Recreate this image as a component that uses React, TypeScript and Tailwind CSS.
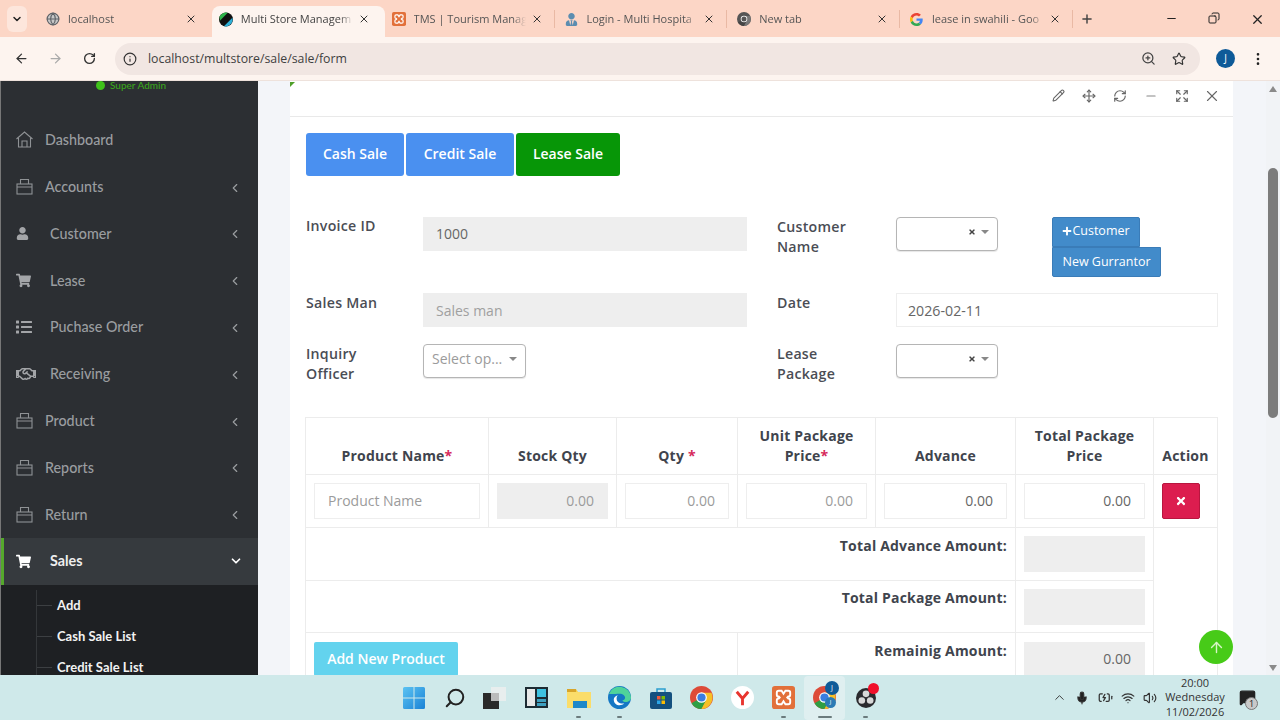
import React from "react";
import { ArrowLeft, ArrowRight, RotateCw, Info, ZoomIn, Star, EllipsisVertical, X, Plus, Minus, Copy, ChevronDown, ChevronLeft, ChevronUp, Pencil, Move, RefreshCw, Expand, ArrowUp, Search, Globe, Mic, Wifi, Volume2, BatteryCharging, MessageSquare } from "lucide-react";
import { FaUser, FaShoppingCart, FaList, FaRegHandshake, FaUserTie, FaPlus, FaTimes } from "react-icons/fa";

const Chrome = ({ s = 14, gray = false }: { s?: number; gray?: boolean }) => (
  <svg width={s} height={s} viewBox="0 0 24 24">
    <circle cx="12" cy="12" r="12" fill={gray ? "#555" : "#dd4b39"} />
    <path d="M12 12 L1.600 18 A12 12 0 0 0 12 24 L18 14 Z" fill={gray ? "#444" : "#2f9e44"} />
    <path d="M12 7 H22.400 A12 12 0 0 1 12 24 L17 14 Z" fill={gray ? "#777" : "#f6c026"} />
    <circle cx="12" cy="12" r="5.600" fill="#fff" />
    <circle cx="12" cy="12" r="4.300" fill={gray ? "#555" : "#3b7de0"} />
  </svg>
);
const GoogleG = () => (
  <svg width="13" height="13" viewBox="0 0 48 48">
    <path fill="#EA4335" d="M24 9.500c3.500 0 6.700 1.200 9.200 3.600l6.900-6.900C35.900 2.400 30.500 0 24 0 14.600 0 6.500 5.400 2.600 13.200l8 6.200C12.500 13.700 17.800 9.500 24 9.500z" />
    <path fill="#4285F4" d="M46.900 24.500c0-1.600-.1-3.100-.4-4.500H24v9h12.900c-.6 3-2.200 5.500-4.700 7.200l7.700 6c4.500-4.200 7-10.300 7-17.700z" />
    <path fill="#FBBC05" d="M10.500 28.600A14.500 14.500 0 0 1 9.700 24c0-1.600.3-3.200.8-4.600l-8-6.200A24 24 0 0 0 0 24c0 3.900.9 7.500 2.600 10.800l7.900-6.200z" />
    <path fill="#34A853" d="M24 48c6.500 0 11.900-2.100 15.900-5.800l-7.700-6c-2.200 1.400-4.900 2.300-8.200 2.300-6.200 0-11.500-4.200-13.400-9.900l-8 6.200C6.500 42.600 14.600 48 24 48z" />
  </svg>
);
const Flag = () => (
  <svg width="15" height="15" viewBox="0 0 24 24">
    <circle cx="12" cy="12" r="12" fill="#111" />
    <path d="M1 7 A12 12 0 0 1 15 .5 L1.500 14 Z" fill="#2eb44a" />
    <path d="M23 9 A12 12 0 0 1 8.500 23.500 Z" fill="#2fb0d8" />
  </svg>
);
const Xampp = ({ s = 14 }: { s?: number }) => (
  <svg width={s} height={s} viewBox="0 0 24 24">
    <rect width="24" height="24" rx="3" fill="#e2703a" />
    <path d="M7 5h3l2 3 2-3h3a2 2 0 0 1 2 2v2a2 2 0 0 1-2 2l-1 1 1 1a2 2 0 0 1 2 2v2a2 2 0 0 1-2 2h-3l-2-3-2 3H7a2 2 0 0 1-2-2v-2a2 2 0 0 1 2-2l1-1-1-1a2 2 0 0 1-2-2V7a2 2 0 0 1 2-2Z" fill="none" stroke="#fff" strokeWidth="2" />
  </svg>
);

const tabs = [
  { t: "localhost", i: <Globe size={14} className="text-[#5f6368]" fill="#c8c8c8" />, x: false },
  { t: "Multi Store Managem", i: <Flag />, x: false, active: true },
  { t: "TMS | Tourism Manag", i: <Xampp />, x: true },
  { t: "Login - Multi Hospita", i: <FaUserTie size={13} className="text-[#5b8db0]" />, x: true },
  { t: "New tab", i: <Chrome gray />, x: true },
  { t: "lease in swahili - Goo", i: <GoogleG />, x: true },
];

function TabBar() {
  return (
    <div className="flex h-[37px] shrink-0 bg-[#fcd6c6] text-[#555]">
      <div className="ml-[7px] mr-[12px] mt-[6px] flex h-[26px] w-[20px] items-center justify-center rounded-md bg-[#fde6dc]">
        <ChevronDown size={12} strokeWidth={3} className="text-[#222]" />
      </div>
      {tabs.map((tab) => (
        <div key={tab.t} className={`mt-[6px] flex h-[31px] w-[172.800px] shrink-0 items-center pb-[5px] ${tab.active ? "rounded-t-lg bg-[#fdf4ef] text-[#444]" : ""}`}>
          <div className="ml-[7px] flex w-[14px] justify-center">{tab.i}</div>
          <span className="ml-[8px] w-[112px] overflow-hidden whitespace-nowrap text-[11px] [font-family:'Open_Sans',sans-serif] [mask-image:linear-gradient(to_right,black_88%,transparent)]">{tab.t}</span>
          <X size={12} strokeWidth={2} className="ml-[5px] text-[#333]" />
          {tab.x ? <div className="ml-[11px] h-[18px] w-px bg-[#e9b9a4]" /> : null}
        </div>
      ))}
      <Plus size={14} strokeWidth={2.500} className="ml-[4px] mt-[12px] text-[#444]" />
      <div className="ml-[71px] mt-[12px] flex items-start text-[#222]">
        <Minus size={13} />
        <Copy size={12} className="ml-[30px] -scale-x-100" />
        <X size={15} className="ml-[30px]" />
      </div>
    </div>
  );
}

function Toolbar() {
  return (
    <div className="flex h-[44px] shrink-0 items-center border-b border-[#eee2dc] bg-[#fdf4ef] text-[#444] [font-family:'Open_Sans',sans-serif]">
      <ArrowLeft size={15} className="ml-[14px] text-[#333]" />
      <ArrowRight size={15} className="ml-[19px] text-[#aaa]" />
      <RotateCw size={13} strokeWidth={2.500} className="ml-[20px] text-[#333]" />
      <div className="ml-[19px] flex h-[32px] w-[1085px] items-center rounded-full bg-[#f1e6e2]">
        <Info size={14} strokeWidth={2} className="ml-[8px] text-[#333]" />
        <span className="ml-[11px] pt-[2px] text-[12.300px] text-[#3f3f3f]">localhost/multstore/sale/sale/form</span>
        <ZoomIn size={15} className="ml-auto -translate-x-[1px] text-[#444]" />
        <Star size={14} className="ml-[15px] mr-[14px] text-[#333]" />
      </div>
      <div className="ml-[16px] flex h-[19px] w-[19px] items-center justify-center rounded-full bg-[#0e5a98] text-[10px] text-white">J</div>
      <EllipsisVertical size={16} className="ml-[15px] text-[#222]" />
    </div>
  );
}

const Bag = () => (
  <svg width="17" height="17" viewBox="0 0 17 17" fill="none" stroke="#8f9295" strokeWidth="1.100">
    <rect x="1" y="6" width="15" height="10" />
    <path d="M4.500 6V1.500h8V6M1 9h15" />
  </svg>
);
const Home = () => (
  <svg width="17" height="17" viewBox="0 0 17 17" fill="none" stroke="#8f9295" strokeWidth="1.100">
    <path d="M.5 8 8.500 1l8 7M2.500 7v9h12V7M6 16v-6h5v6" />
  </svg>
);

const menu: { label: string; icon: React.ReactNode; ml: number; arrow: boolean }[] = [
  { label: "Dashboard", icon: <Home />, ml: 45, arrow: false },
  { label: "Accounts", icon: <Bag />, ml: 45, arrow: true },
  { label: "Customer", icon: <FaUser size={13} />, ml: 50, arrow: true },
  { label: "Lease", icon: <FaShoppingCart size={15} />, ml: 50, arrow: true },
  { label: "Puchase Order", icon: <FaList size={16} />, ml: 50, arrow: true },
  { label: "Receiving", icon: <FaRegHandshake size={20} />, ml: 50, arrow: true },
  { label: "Product", icon: <Bag />, ml: 45, arrow: true },
  { label: "Reports", icon: <Bag />, ml: 45, arrow: true },
  { label: "Return", icon: <Bag />, ml: 45, arrow: true },
];

function Sidebar() {
  return (
    <aside className="flex w-[258px] shrink-0 flex-col overflow-hidden border-l border-[#777] bg-[#2c2f33] text-[14.300px] font-medium [font-family:'Lato',sans-serif]">
      <div className="flex h-[36px] shrink-0 items-start pl-[95px]">
        <span className="-mt-[3px] flex items-center text-[10px] text-[#3aa51c]">
          <span className="mr-[5px] h-[9px] w-[9px] rounded-full bg-[#3fc11a]" />
          Super Admin
        </span>
      </div>
      {menu.map((m) => (
        <div key={m.label} className="flex h-[46.800px] shrink-0 items-center pb-[1px] text-[#9a9da0]">
          <div className="ml-[15px] flex w-[20px] justify-start text-[#a3a5a8]">{m.icon}</div>
          <span style={{ marginLeft: m.ml - 36 }}>{m.label}</span>
          {m.arrow ? <ChevronLeft size={14} strokeWidth={2} className="ml-auto mr-[16px] mt-[2px] text-[#9a9da0]" /> : null}
        </div>
      ))}
      <div className="flex h-[47px] shrink-0 items-center border-l-[3px] border-[#55a82c] bg-[#363a3e] pb-[1px] text-[#eee]">
        <div className="ml-[12px] flex w-[20px] text-white"><FaShoppingCart size={15} /></div>
        <span className="ml-[14px] font-bold">Sales</span>
        <ChevronDown size={14} strokeWidth={3} className="ml-auto mr-[15px] text-white" />
      </div>
      <div className="flex grow flex-col bg-[#1e2023] text-[13px] font-bold text-[#f2f2f2]">
        {["Add", "Cash Sale List", "Credit Sale List"].map((s) => (
          <div key={s} className="flex h-[31px] shrink-0 items-center pt-[10px]">
            <div className="ml-[35px] h-[31px] w-px bg-[#34373a]" />
            <div className="h-px w-[15px] bg-[#3c3f42]" />
            <span className="ml-[5px]">{s}</span>
          </div>
        ))}
      </div>
    </aside>
  );
}

const input = "h-[36px] border border-[#eeeeee] bg-white text-right text-[14px] text-[#9b9b9b] px-[13px] pb-[2px] flex items-center justify-end";
const Select2 = () => (
  <div className="flex h-[34px] w-[102px] items-center justify-end rounded border border-[#b5b5b5] bg-white pb-[4px] pr-[8px] text-[#444] shadow-[0_1px_1px_rgba(0,0,0,0.1)]">
    <FaTimes size={8} />
    <span className="ml-[5px] h-0 w-0 border-x-[4px] border-t-[4px] border-x-transparent border-t-[#888]" />
  </div>
);
const Label = ({ children }: { children: React.ReactNode }) => (
  <div className="text-[14.200px] font-semibold leading-[20px] tracking-[0.25px] text-[#4a4d55]">{children}</div>
);
const Th = ({ children, w }: { children: React.ReactNode; w: string }) => (
  <th className={`border border-[#ececec] px-[8px] pb-[8px] align-bottom text-[14px] font-bold leading-[20px] tracking-[0.2px] text-[#40444d] ${w}`}>{children}</th>
);
const Req = () => <span className="text-[#d62a5b]">*</span>;
const totalText = "border border-[#ececec] pb-[18px] pr-[8px] text-right text-[14px] font-bold tracking-[0.2px] text-[#40444d]";

function Form() {
  return (
    <div className="relative w-[943px] shrink-0 self-stretch bg-white">
      <div className="absolute left-0 top-[1px] h-0 w-0 border-r-[5px] border-t-[5px] border-r-transparent border-t-[#4f9f29]" />
      <div className="flex h-[36px] items-center justify-end border-b border-[#e9e9e9] pb-[6px] pr-[12px] text-[#666]">
        <Pencil size={13} />
        <Move size={14} className="ml-[17px]" />
        <RefreshCw size={14} className="ml-[17px]" />
        <Minus size={14} className="ml-[17px] text-[#888]" />
        <Expand size={14} className="ml-[17px]" />
        <X size={18} strokeWidth={1.500} className="ml-[14px]" />
      </div>
      <div className="px-[16px] pt-[16px]">
        <div className="flex gap-[2px] text-[14px] font-semibold text-white">
          <div className="flex h-[43px] w-[98px] items-center justify-center rounded-[3px] bg-[#4a90f0] pb-[2px]">Cash Sale</div>
          <div className="flex h-[43px] w-[108px] items-center justify-center rounded-[3px] bg-[#4a90f0] pb-[2px]">Credit Sale</div>
          <div className="flex h-[43px] w-[104px] items-center justify-center rounded-[3px] bg-[#079607] pb-[2px]">Lease Sale</div>
        </div>
        <div className="mt-[40px] grid grid-cols-[117px_324px_30px_119px_322px] grid-rows-[77px_51px_73px]">
          <Label>Invoice ID</Label>
          <div className="mt-[1px] flex h-[34px] items-center bg-[#eeeeee] pb-[2px] pl-[13px] text-[14px] text-[#666]">1000</div>
          <div className="col-start-4 pt-[1px]"><Label>Customer<br />Name</Label></div>
          <div className="flex items-start pt-[1px]">
            <Select2 />
            <div className="ml-[54px] flex flex-col items-start text-[12.500px] font-medium text-white">
              <div className="flex h-[30px] w-[88px] items-center justify-center rounded-t-[2px] border border-[#3a7cb8] bg-[#428bca] pb-[2px]"><FaPlus size={10} />Customer</div>
              <div className="flex h-[30px] w-[109px] items-center justify-center rounded-b-[2px] border border-[#3a7cb8] bg-[#428bca]">New Gurrantor</div>
            </div>
          </div>
          <Label>Sales Man</Label>
          <div className="flex h-[34px] items-center bg-[#eeeeee] pl-[13px] text-[14px] text-[#a0a0a0]">Sales man</div>
          <div className="col-start-4"><Label>Date</Label></div>
          <div className="flex h-[34px] items-center border border-[#eeeeee] bg-white pl-[11px] pt-[1px] text-[14.200px] text-[#666]">2026-02-11</div>
          <Label>Inquiry<br />Officer</Label>
          <div className="flex h-[34px] w-[103px] items-center justify-between rounded border border-[#b5b5b5] bg-white pb-[5px] pl-[8px] pr-[8px] text-[14px] text-[#9b9b9b] shadow-[0_1px_1px_rgba(0,0,0,0.1)]">
            <span>Select op...</span>
            <span className="h-0 w-0 border-x-[4px] border-t-[4px] border-x-transparent border-t-[#888]" />
          </div>
          <div className="col-start-4"><Label>Lease<br />Package</Label></div>
          <div><Select2 /></div>
        </div>
        <table className="-ml-[1px] w-[912px] table-fixed border-collapse border border-[#ececec]">
          <thead>
            <tr className="h-[57px]">
              <Th w="w-[183px]">Product Name<Req /></Th>
              <Th w="w-[128px]">Stock Qty</Th>
              <Th w="w-[121px]">Qty <Req /></Th>
              <Th w="w-[138px]">Unit Package Price<Req /></Th>
              <Th w="w-[140px]">Advance</Th>
              <Th w="w-[138px]">Total Package Price</Th>
              <Th w="w-[64px]">Action</Th>
            </tr>
          </thead>
          <tbody>
            <tr className="h-[53px]">
              <td className="border border-[#ececec] px-[8px]"><div className={`${input} !justify-start`}>Product Name</div></td>
              <td className="border border-[#ececec] px-[8px]"><div className={`${input} !border-[#eeeeee] !bg-[#eeeeee]`}>0.00</div></td>
              <td className="border border-[#ececec] px-[8px]"><div className={input}>0.00</div></td>
              <td className="border border-[#ececec] px-[8px]"><div className={input}>0.00</div></td>
              <td className="border border-[#ececec] px-[8px]"><div className={`${input} !text-[#666]`}>0.00</div></td>
              <td className="border border-[#ececec] px-[8px]"><div className={`${input} !text-[#666]`}>0.00</div></td>
              <td className="border border-[#ececec] px-[8px]">
                <div className="flex h-[36px] w-[38px] items-center justify-center rounded-[2px] border border-[#b8163f] bg-[#dc1d4f] text-white"><FaTimes size={12} /></div>
              </td>
            </tr>
            <tr className="h-[53px]">
              <td colSpan={5} className={totalText}>Total Advance Amount:</td>
              <td className="border border-[#ececec] px-[8px]"><div className="h-[36px] bg-[#eeeeee]" /></td>
              <td rowSpan={3} className="border border-[#ececec]" />
            </tr>
            <tr className="h-[52px]">
              <td colSpan={5} className={totalText}>Total Package Amount:</td>
              <td className="border border-[#ececec] px-[8px]"><div className="h-[36px] bg-[#eeeeee]" /></td>
            </tr>
            <tr className="h-[52px]">
              <td colSpan={3} className="border border-[#ececec] px-[8px] pt-[9px] align-top">
                <div className="flex h-[34px] w-[144px] items-center justify-center rounded-[2px] bg-[#63d3ee] pb-[2px] text-[14px] font-semibold text-white">Add New Product</div>
              </td>
              <td colSpan={2} className="border border-[#ececec] pb-[17px] pr-[8px] text-right text-[14px] font-bold tracking-[0.2px] text-[#40444d]">Remainig Amount:</td>
              <td className="border border-[#ececec] px-[8px] pt-[9px] align-top"><div className={`${input} !h-[34px] !border-[#eeeeee] !bg-[#eeeeee] !text-[#666]`}>0.00</div></td>
            </tr>
          </tbody>
        </table>
      </div>
    </div>
  );
}

function Scrollbar() {
  return (
    <div className="flex w-[14px] shrink-0 flex-col items-center bg-[#f1f3f6]">
      <span className="mt-[5px] h-0 w-0 border-x-[4px] border-b-[6px] border-x-transparent border-b-[#8a8a8a]" />
      <div className="mt-[76px] h-[250px] w-[10px] shrink-0 rounded-full bg-[#7c7c7c]" />
      <span className="mb-[4px] mt-auto h-0 w-0 border-x-[4px] border-t-[6px] border-x-transparent border-t-[#8a8a8a]" />
    </div>
  );
}

function Content() {
  return (
    <div className="relative flex h-[594px] shrink-0 overflow-hidden [font-family:'Open_Sans',sans-serif]">
      <Sidebar />
      <main className="flex grow overflow-hidden bg-[#f3f5f9] pl-[32px]">
        <Form />
      </main>
      <Scrollbar />
      <button className="absolute left-[1199px] top-[549px] flex h-[34px] w-[34px] items-center justify-center rounded-full bg-[#47cb18] text-[#d8f5c8]">
        <ArrowUp size={17} />
      </button>
    </div>
  );
}

const Win = () => (
  <svg width="22" height="22" viewBox="0 0 22 22">
    <defs><linearGradient id="w" x1="0" y1="0" x2="1" y2="1"><stop offset="0" stopColor="#5cc3f2" /><stop offset="1" stopColor="#1a82d6" /></linearGradient></defs>
    <path fill="url(#w)" d="M0 1.500 A1.500 1.500 0 0 1 1.500 0H10.500V10.500H0ZM11.500 0H20.500A1.500 1.500 0 0 1 22 1.500V10.500H11.500ZM0 11.500H10.500V22H1.500A1.500 1.500 0 0 1 0 20.500ZM11.500 11.500H22V20.500A1.500 1.500 0 0 1 20.500 22H11.500Z" />
  </svg>
);
const T = ({ w, active, dot, children }: { w: number; active?: boolean; dot?: boolean; children: React.ReactNode }) => (
  <div style={{ width: w }} className={`relative flex h-[44px] shrink-0 items-center justify-center rounded ${active ? "bg-[#dfeff0]" : ""}`}>
    {children}
    {dot ? <span className={`absolute bottom-[2px] h-[2px] rounded bg-[#6b7b7d] ${active ? "w-[14px]" : "w-[5px]"}`} /> : null}
  </div>
);

function Taskbar() {
  return (
    <div className="flex h-[45px] shrink-0 items-center bg-[#cfe9ea] text-[#222] [font-family:'Open_Sans',sans-serif]">
      <div className="ml-[394px] flex items-center">
        <T w={40}><Win /></T>
        <T w={41}><Search size={22} strokeWidth={2.200} className="-scale-x-100 text-[#222]" /></T>
        <T w={39}>
          <svg width="24" height="22" viewBox="0 0 24 22"><rect x="8" y="0" width="15" height="14" fill="#e8eeee" /><rect x="0" y="6" width="16" height="16" fill="#2a2a2a" /><rect x="8" y="6" width="8" height="8" fill="#bbb" /></svg>
        </T>
        <T w={44}>
          <svg width="23" height="21" viewBox="0 0 23 21"><rect width="23" height="21" fill="#1d2b33" /><rect x="2" y="2" width="8" height="17" fill="#e8e8e8" /><rect x="12" y="2" width="9" height="8" fill="#3fc1e0" /><rect x="12" y="12" width="9" height="3" fill="#3fa0c0" /><rect x="12" y="16" width="9" height="3" fill="#3fa0c0" /></svg>
        </T>
        <T w={41} dot>
          <svg width="24" height="20" viewBox="0 0 24 20"><path d="M0 1h9l2 3h13v16H0Z" fill="#f7d24a" /><rect y="4" width="24" height="16" fill="#fbdd6a" /><rect x="6" y="13" width="14" height="7" fill="#1f88c9" /><rect y="1" width="9" height="3" fill="#d8a52a" /></svg>
        </T>
        <T w={41} dot>
          <svg width="23" height="23" viewBox="0 0 24 24"><circle cx="12" cy="12" r="12" fill="#1477c4" /><path d="M1 8 A12 12 0 0 1 24 12 C24 17 17 18 15 15 C20 14 18 8 12 8 C8 8 3 9 1 8Z" fill="#4fd39a" /><path d="M9 13 C9 17 13 19 17 18 C13 22 6 20 6 14 C6 12 8 10 11 9 C9 10 9 12 9 13Z" fill="#fff" /></svg>
        </T>
        <T w={41}>
          <svg width="22" height="22" viewBox="0 0 22 22"><path d="M7 5V2h8v3" fill="none" stroke="#2c9ed0" strokeWidth="1.500" /><rect y="5" width="22" height="17" rx="2" fill="#14507f" /><rect x="7" y="9" width="3.500" height="3.500" fill="#ef5a3c" /><rect x="11.500" y="9" width="3.500" height="3.500" fill="#7fba00" /><rect x="7" y="13.500" width="3.500" height="3.500" fill="#2ba6e8" /><rect x="11.500" y="13.500" width="3.500" height="3.500" fill="#fbbc05" /></svg>
        </T>
        <T w={41}><Chrome s={23} /></T>
        <T w={41}>
          <svg width="23" height="23" viewBox="0 0 24 24"><circle cx="12" cy="12" r="12" fill="#fff" /><path d="M6 6 L12 13 L18 6 M12 13 V20" fill="none" stroke="#e8352e" strokeWidth="3" /></svg>
        </T>
        <T w={41} dot><Xampp s={23} /></T>
        <T w={41} active dot>
          <div className="relative">
            <Chrome s={23} />
            <span className="absolute left-[12px] top-[-5px] flex h-[14px] w-[14px] items-center justify-center rounded-full bg-[#0e5a98] text-[7px] text-white">J</span>
            <span className="absolute left-[12px] top-[11px] flex h-[11px] w-[11px] items-center justify-center rounded-full bg-[#2b7bb5] text-[6px] text-white">J</span>
          </div>
        </T>
        <T w={41} dot>
          <div className="relative">
            <svg width="20" height="20" viewBox="0 0 24 24"><circle cx="12" cy="12" r="12" fill="#2a2a2e" /><circle cx="12" cy="7" r="4" fill="#d8d8d8" /><circle cx="7" cy="15" r="4" fill="#d8d8d8" /><circle cx="17" cy="15" r="4" fill="#d8d8d8" /></svg>
            <span className="absolute right-[-3px] top-[-5px] h-[11px] w-[11px] rounded-full bg-[#f0102a]" />
          </div>
        </T>
      </div>
      <div className="ml-[166px] flex items-center text-[#333]">
        <ChevronUp size={15} strokeWidth={1.500} />
        <Mic size={14} className="ml-[8px]" fill="#222" />
        <BatteryCharging size={15} className="ml-[9px]" />
        <Wifi size={14} className="ml-[8px]" />
        <Volume2 size={14} className="ml-[8px]" />
      </div>
      <div className="ml-[7px] w-[62px] text-center text-[11px] leading-[14.500px] text-[#333]">
        20:00<br />Wednesday<br />11/02/2026
      </div>
      <div className="relative ml-[13px]">
        <MessageSquare size={17} fill="#222" className="text-[#222]" />
        <span className="absolute left-[6px] top-[8px] flex h-[13px] w-[13px] items-center justify-center rounded-full border border-[#777] bg-[#c9c9c9] text-[9px] text-[#222]">1</span>
      </div>
    </div>
  );
}

export default function App() {
  return (
    <div className="flex h-[720px] w-[1280px] flex-col overflow-hidden bg-white">
      <TabBar />
      <Toolbar />
      <Content />
      <Taskbar />
    </div>
  );
}
